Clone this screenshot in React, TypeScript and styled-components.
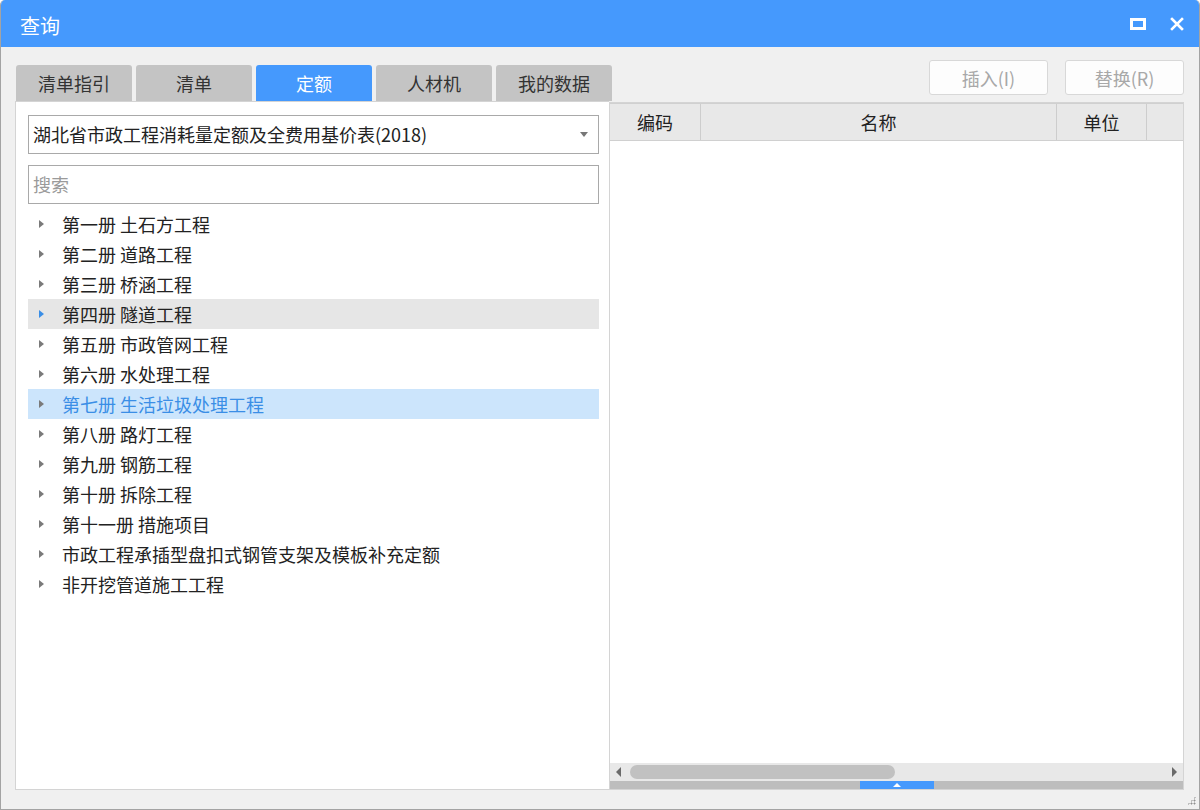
import React from 'react';
import styled, { createGlobalStyle } from 'styled-components';

const GlobalStyle = createGlobalStyle`
  html, body {
    margin: 0;
    padding: 0;
    background: #ffffff;
  }
  body {
    font-family: "Noto Sans CJK SC", "Noto Sans", "Liberation Sans", sans-serif;
  }
`;

const Window = styled.div`
  width: 1200px;
  height: 810px;
  box-sizing: border-box;
  border: 1px solid #a3a3a3;
  border-top: none;
  border-radius: 5px 5px 0 0;
  background: #f0f0f0;
  display: flex;
  flex-direction: column;
  overflow: hidden;
`;

const TitleBar = styled.div`
  height: 47px;
  flex: none;
  background: #4599fd;
  display: flex;
  align-items: center;
  padding: 0 10px 0 19px;
  color: #fff;
`;

const Title = styled.div`
  flex: 1;
  font-size: 20px;
  line-height: 1;
  margin-top: 5px;
`;

const TitleButton = styled.div`
  width: 24px;
  height: 24px;
  display: flex;
  align-items: center;
  justify-content: center;
  margin-left: 15px;
`;

const Body = styled.div`
  flex: none;
  display: flex;
  flex-direction: column;
  padding: 0 14px 0 14px;
`;

const TopRow = styled.div`
  height: 54px;
  flex: none;
  display: flex;
  align-items: flex-end;
  justify-content: space-between;
`;

const Tabs = styled.div`
  display: flex;
  gap: 4px;
  padding-left: 1px;
`;

const Tab = styled.div<{ $active?: boolean }>`
  width: 116px;
  height: 36px;
  border-radius: 3px 3px 0 0;
  background: ${(p) => (p.$active ? '#4599fd' : '#c4c4c4')};
  color: ${(p) => (p.$active ? '#ffffff' : '#333333')};
  font-size: 18px;
  display: flex;
  align-items: center;
  justify-content: center;
`;

const Actions = styled.div`
  display: flex;
  gap: 17px;
  margin: 0 1px 6px 0;
`;

const ActionButton = styled.div`
  width: 119px;
  height: 35px;
  box-sizing: border-box;
  background: #fdfdfd;
  border: 1px solid #d8d8d8;
  border-radius: 3px;
  color: #a8a8a8;
  font-size: 18px;
  display: flex;
  align-items: center;
  justify-content: center;
`;

const Main = styled.div`
  height: 689px;
  flex: none;
  display: flex;
`;

const LeftPanel = styled.div`
  width: 594px;
  flex: none;
  box-sizing: border-box;
  background: #fff;
  border: 1px solid #d4d4d4;
  border-right: none;
  padding: 13px 10px 0 12px;
  display: flex;
  flex-direction: column;
`;

const Field = styled.div<{ $placeholder?: boolean }>`
  height: 39px;
  box-sizing: border-box;
  border: 1px solid #a9a9a9;
  display: flex;
  align-items: center;
  padding: 0 10px 1px 4px;
  font-size: 18px;
  color: ${(p) => (p.$placeholder ? '#9a9a9a' : '#222')};
  & + & {
    margin-top: 11px;
  }
`;

const FieldText = styled.div`
  flex: 1;
`;

const Caret = styled.div`
  width: 0;
  height: 0;
  border-left: 4px solid transparent;
  border-right: 4px solid transparent;
  border-top: 5px solid #777;
  margin-top: 1px;
`;

const Tree = styled.div`
  margin-top: 5px;
  display: flex;
  flex-direction: column;
`;

const TreeRow = styled.div<{ $state?: 'hover' | 'selected' }>`
  height: 30px;
  box-sizing: border-box;
  padding-bottom: 1px;
  display: flex;
  align-items: center;
  font-size: 18px;
  background: ${(p) =>
    p.$state === 'hover' ? '#e6e6e6' : p.$state === 'selected' ? '#cce5fc' : 'transparent'};
  color: ${(p) => (p.$state === 'selected' ? '#3a8ee6' : '#222')};
`;

const Arrow = styled.div<{ $blue?: boolean }>`
  width: 0;
  height: 0;
  border-top: 4px solid transparent;
  border-bottom: 4px solid transparent;
  border-left: 5px solid ${(p) => (p.$blue ? '#3a8ee6' : '#7a7a7a')};
  margin: 0 18px 0 11px;
`;

const RightPanel = styled.div`
  flex: 1;
  box-sizing: border-box;
  margin-top: 1px;
  margin-right: 1px;
  background: #fff;
  border: 1px solid #d4d4d4;
  display: flex;
  flex-direction: column;
`;

const HeaderRow = styled.div`
  height: 36px;
  flex: none;
  display: flex;
  background: #e8e8e8;
  border-top: 1px solid #d0d0d0;
  border-bottom: 1px solid #d0d0d0;
`;

const HeaderCell = styled.div<{ $w?: number }>`
  width: ${(p) => (p.$w ? `${p.$w}px` : 'auto')};
  flex: ${(p) => (p.$w ? 'none' : '1')};
  box-sizing: border-box;
  border-right: 1px solid #cdcdcd;
  display: flex;
  align-items: center;
  justify-content: center;
  font-size: 18px;
  color: #222;
  &:last-child {
    border-right: none;
  }
`;

const TableBody = styled.div`
  flex: 1;
`;

const ScrollBar = styled.div`
  height: 18px;
  flex: none;
  background: #e8e8e8;
  display: flex;
  align-items: center;
  padding: 0 6px 0 6px;
  gap: 9px;
`;

const ScrollArrow = styled.div<{ $dir: 'left' | 'right' }>`
  width: 0;
  height: 0;
  border-top: 5px solid transparent;
  border-bottom: 5px solid transparent;
  ${(p) => (p.$dir === 'left' ? 'border-right: 5px solid #6a6a6a;' : 'border-left: 5px solid #6a6a6a;')}
`;

const ScrollTrack = styled.div`
  flex: 1;
  height: 14px;
  display: flex;
`;

const Thumb = styled.div`
  width: 265px;
  height: 14px;
  border-radius: 7px;
  background: #c1c1c1;
`;

const Splitter = styled.div`
  height: 8px;
  flex: none;
  background: #bdbdbd;
  display: flex;
  justify-content: center;
`;

const SplitterHandle = styled.div`
  width: 74px;
  height: 8px;
  background: #4599fd;
  display: flex;
  align-items: center;
  justify-content: center;
  &::after {
    content: '';
    border-left: 4px solid transparent;
    border-right: 4px solid transparent;
    border-bottom: 4px solid #fff;
  }
`;

const Footer = styled.div`
  flex: 1;
  display: flex;
  justify-content: flex-end;
  align-items: flex-end;
  padding: 0 3px 4px 0;
`;

const Grip = styled.div`
  width: 9px;
  height: 9px;
  background-image: radial-gradient(circle, #8f8f8f 0.9px, transparent 1.1px);
  background-size: 3px 3px;
  clip-path: polygon(100% 0, 100% 100%, 0 100%);
`;

const tabs = ['清单指引', '清单', '定额', '人材机', '我的数据'];

const chapters = [
  '第一册 土石方工程',
  '第二册 道路工程',
  '第三册 桥涵工程',
  '第四册 隧道工程',
  '第五册 市政管网工程',
  '第六册 水处理工程',
  '第七册 生活垃圾处理工程',
  '第八册 路灯工程',
  '第九册 钢筋工程',
  '第十册 拆除工程',
  '第十一册 措施项目',
  '市政工程承插型盘扣式钢管支架及模板补充定额',
  '非开挖管道施工工程',
];

export default function App() {
  return (
    <>
      <GlobalStyle />
      <Window>
        <TitleBar>
          <Title>查询</Title>
          <TitleButton>
            <svg width="16" height="12" viewBox="0 0 16 12">
              <rect x="1.5" y="1.5" width="13" height="9" fill="none" stroke="#fff" strokeWidth="3" />
            </svg>
          </TitleButton>
          <TitleButton>
            <svg width="14" height="14" viewBox="0 0 14 14">
              <path d="M2 2 L12 12 M12 2 L2 12" stroke="#fff" strokeWidth="2.6" strokeLinecap="square" />
            </svg>
          </TitleButton>
        </TitleBar>
        <Body>
          <TopRow>
            <Tabs>
              {tabs.map((t) => (
                <Tab key={t} $active={t === '定额'}>
                  {t}
                </Tab>
              ))}
            </Tabs>
            <Actions>
              <ActionButton>插入(I)</ActionButton>
              <ActionButton>替换(R)</ActionButton>
            </Actions>
          </TopRow>
          <Main>
            <LeftPanel>
              <Field>
                <FieldText>湖北省市政工程消耗量定额及全费用基价表(2018)</FieldText>
                <Caret />
              </Field>
              <Field $placeholder>
                <FieldText>搜索</FieldText>
              </Field>
              <Tree>
                {chapters.map((c, i) => {
                  const state = i === 3 ? 'hover' : i === 6 ? 'selected' : undefined;
                  return (
                    <TreeRow key={c} $state={state}>
                      <Arrow $blue={i === 3} />
                      {c}
                    </TreeRow>
                  );
                })}
              </Tree>
            </LeftPanel>
            <RightPanel>
              <HeaderRow>
                <HeaderCell $w={91}>编码</HeaderCell>
                <HeaderCell>名称</HeaderCell>
                <HeaderCell $w={90}>单位</HeaderCell>
                <HeaderCell $w={36} />
              </HeaderRow>
              <TableBody />
              <ScrollBar>
                <ScrollArrow $dir="left" />
                <ScrollTrack>
                  <Thumb />
                </ScrollTrack>
                <ScrollArrow $dir="right" />
              </ScrollBar>
              <Splitter>
                <SplitterHandle />
              </Splitter>
            </RightPanel>
          </Main>
        </Body>
        <Footer>
          <Grip />
        </Footer>
      </Window>
    </>
  );
}
